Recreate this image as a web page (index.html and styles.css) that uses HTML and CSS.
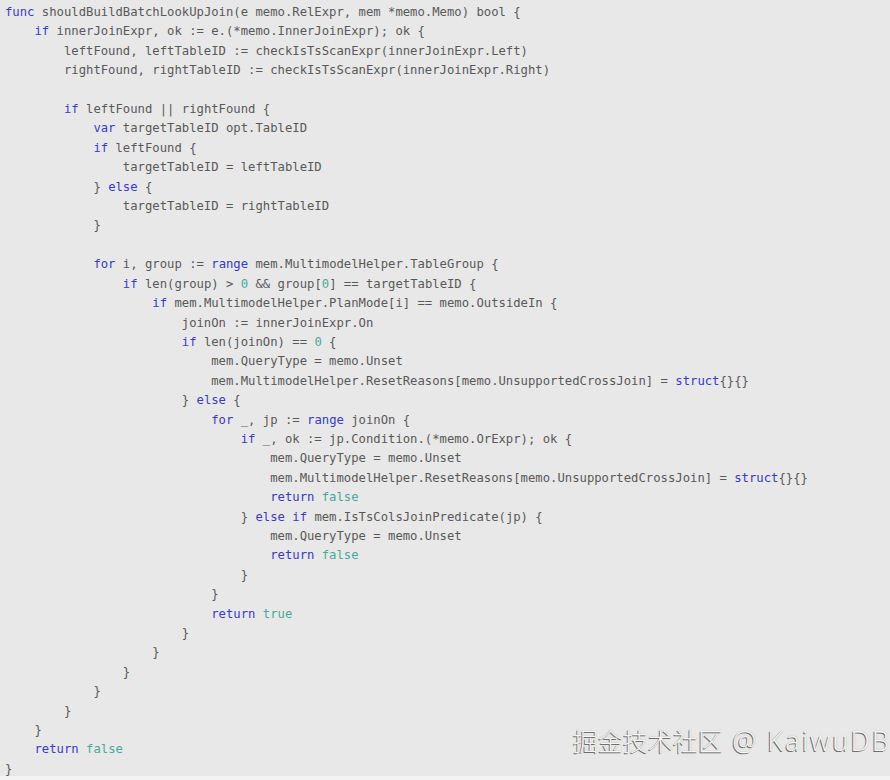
FILE: index.html
```html
<!DOCTYPE html>
<html lang="zh">
<head>
<meta charset="utf-8">
<title>shouldBuildBatchLookUpJoin</title>
<link rel="stylesheet" href="styles.css">
</head>
<body>
<div class="frame">
<pre class="code"><span class="kw">func</span> shouldBuildBatchLookUpJoin(e memo.RelExpr, mem *memo.Memo) bool {
    <span class="kw">if</span> innerJoinExpr, ok := e.(*memo.InnerJoinExpr); ok {
        leftFound, leftTableID := checkIsTsScanExpr(innerJoinExpr.Left)
        rightFound, rightTableID := checkIsTsScanExpr(innerJoinExpr.Right)

        <span class="kw">if</span> leftFound || rightFound {
            <span class="kw">var</span> targetTableID opt.TableID
            <span class="kw">if</span> leftFound {
                targetTableID = leftTableID
            } <span class="kw">else</span> {
                targetTableID = rightTableID
            }

            <span class="kw">for</span> i, group := <span class="kw">range</span> mem.MultimodelHelper.TableGroup {
                <span class="kw">if</span> len(group) &gt; <span class="lit">0</span> &amp;&amp; group[<span class="lit">0</span>] == targetTableID {
                    <span class="kw">if</span> mem.MultimodelHelper.PlanMode[i] == memo.OutsideIn {
                        joinOn := innerJoinExpr.On
                        <span class="kw">if</span> len(joinOn) == <span class="lit">0</span> {
                            mem.QueryType = memo.Unset
                            mem.MultimodelHelper.ResetReasons[memo.UnsupportedCrossJoin] = <span class="kw">struct</span>{}{}
                        } <span class="kw">else</span> {
                            <span class="kw">for</span> _, jp := <span class="kw">range</span> joinOn {
                                <span class="kw">if</span> _, ok := jp.Condition.(*memo.OrExpr); ok {
                                    mem.QueryType = memo.Unset
                                    mem.MultimodelHelper.ResetReasons[memo.UnsupportedCrossJoin] = <span class="kw">struct</span>{}{}
                                    <span class="kw">return</span> <span class="lit">false</span>
                                } <span class="kw">else</span> <span class="kw">if</span> mem.IsTsColsJoinPredicate(jp) {
                                    mem.QueryType = memo.Unset
                                    <span class="kw">return</span> <span class="lit">false</span>
                                }
                            }
                            <span class="kw">return</span> <span class="lit">true</span>
                        }
                    }
                }
            }
        }
    }
    <span class="kw">return</span> <span class="lit">false</span>
}</pre>
<div class="watermark"><span class="wm-cjk">掘金技术社区</span><span class="wm-latin"> @ KaiwuDB</span></div>
</div>
</body>
</html>
```

FILE: styles.css
```css
html, body {
  margin: 0;
  padding: 0;
  background: #f3f3f3;
}

.frame {
  position: relative;
  width: 890px;
  height: 776px;
  background: #e8e8e8;
  overflow: hidden;
}

.code {
  margin: 0;
  padding: 3px 0 0 5px;
  font-family: "DejaVu Sans Mono", "Liberation Mono", monospace;
  font-size: 12.24px;
  line-height: 19.4px;
  color: #595959;
  white-space: pre;
}

.kw {
  color: #3a3ac4;
}

.lit {
  color: #4aa898;
}

.watermark {
  position: absolute;
  left: 573px;
  top: 722px;
  font-family: "Noto Sans CJK SC", "Noto Sans", sans-serif;
  font-weight: 300;
  line-height: 36px;
  color: #f6f6f6;
  text-shadow: -1px 1px 0 #6e6e6e, 0 0 1px #999;
  white-space: nowrap;
}

.wm-cjk {
  font-size: 25px;
}

.wm-latin {
  font-family: "Noto Sans", sans-serif;
  font-size: 27px;
  letter-spacing: 2.1px;
}
```
